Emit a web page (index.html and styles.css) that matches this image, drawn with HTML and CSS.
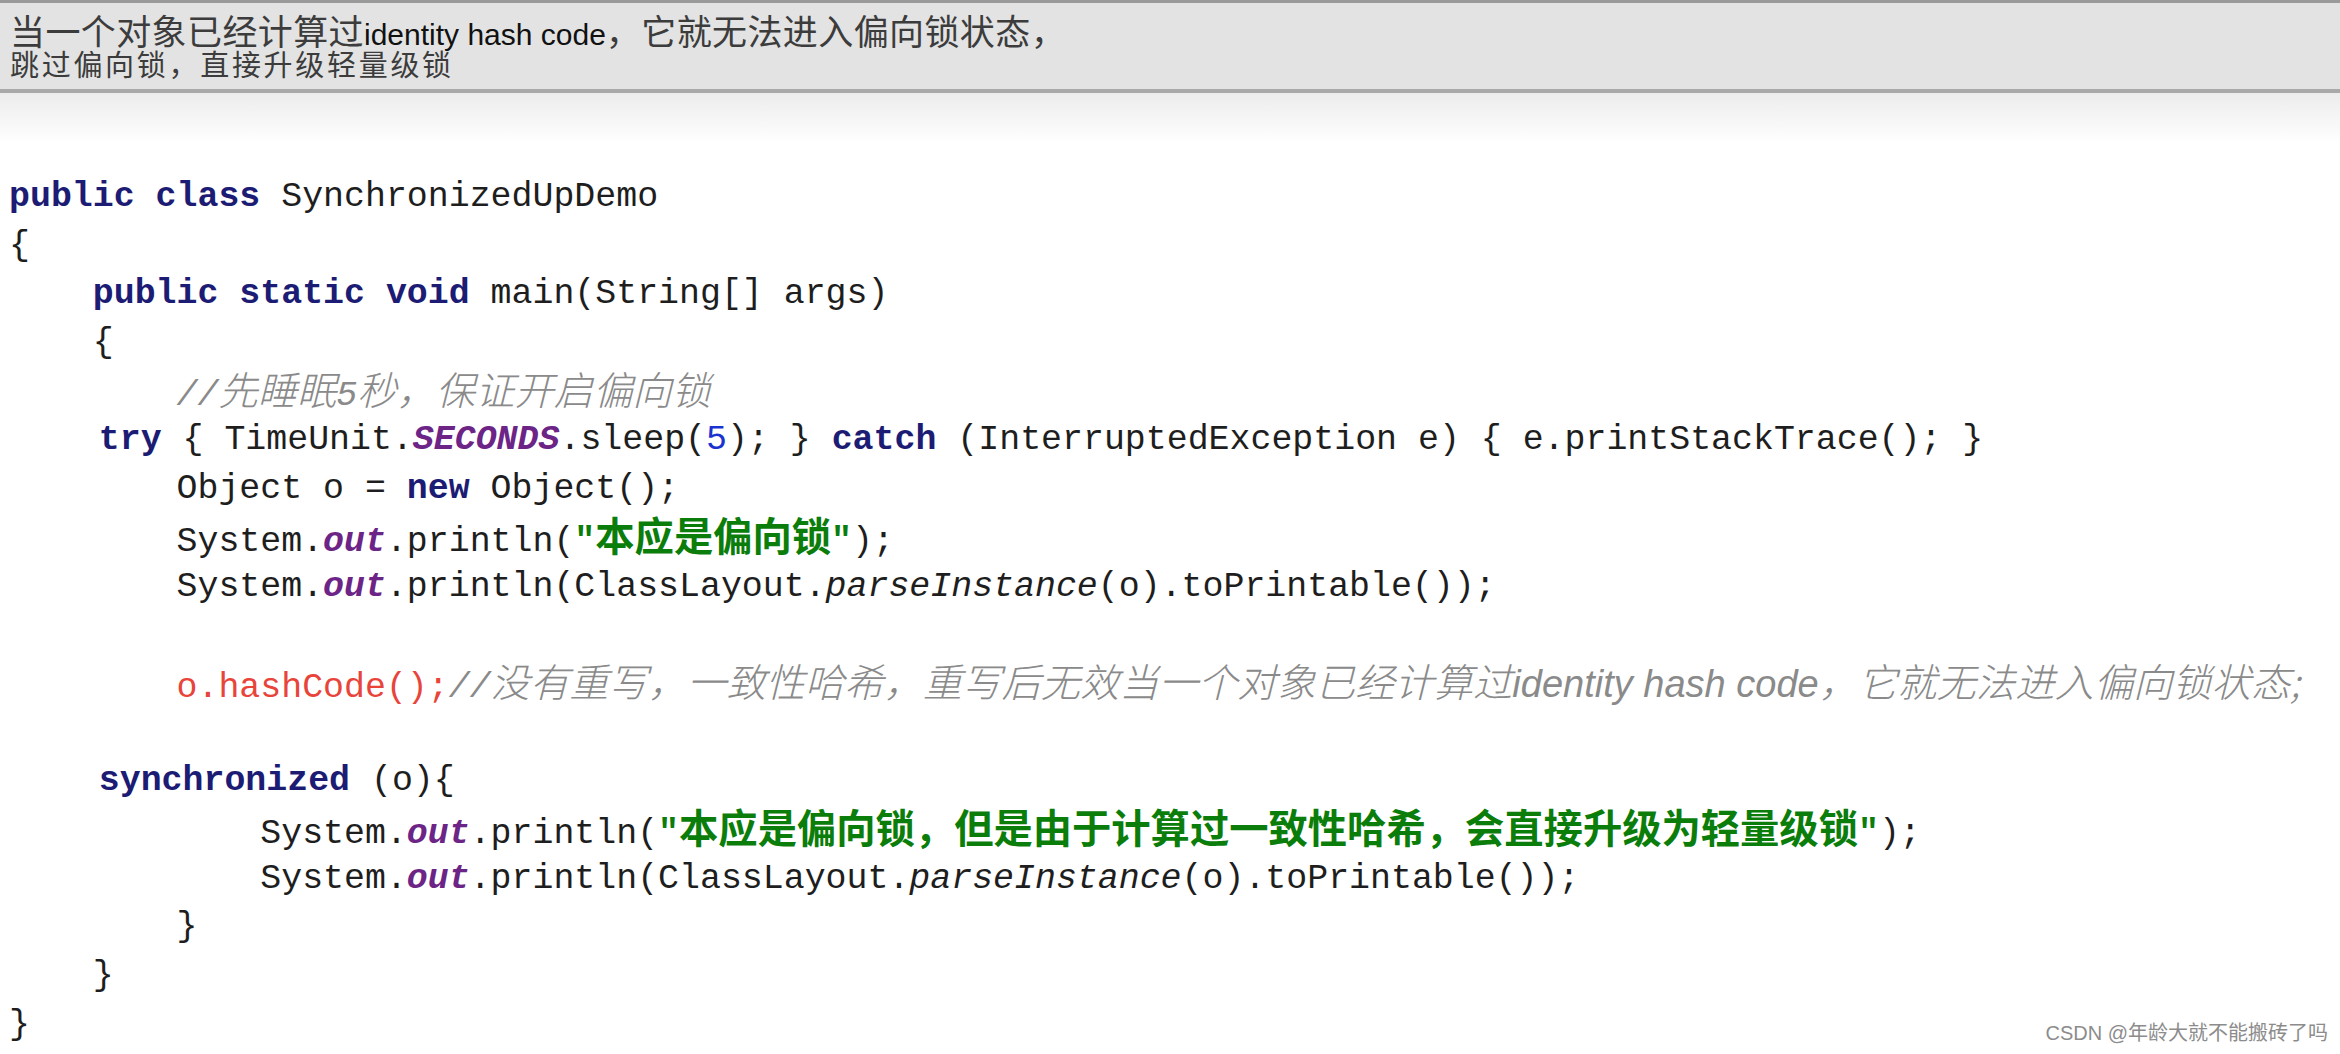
FILE: index.html
```html
<!DOCTYPE html>
<html lang="zh-CN">
<head>
    <meta charset="UTF-8">
    <meta name="viewport" content="width=device-width, initial-scale=1.0">
    <title>SynchronizedUpDemo</title>
    <link rel="stylesheet" href="styles.css">
</head>
<body>
    <div class="banner">
        <p class="note-main">当一个对象已经计算过<span class="lat">identity hash code</span>，它就无法进入偏向锁状态，</p>
        <p class="note-sub">跳过偏向锁，直接升级轻量级锁</p>
    </div>
    <div class="fade"></div>

    <div class="code">
        <div class="ln"><b class="kw">public class</b> SynchronizedUpDemo</div>
        <div class="ln">{</div>
        <div class="ln">    <b class="kw">public static void</b> main(String[] args)</div>
        <div class="ln">    {</div>
        <div class="ln">        <i class="cm">//<span class="zh">先睡眠</span>5<span class="zh">秒，保证开启偏向锁</span></i></div>
        <div class="ln nudge">    <b class="kw">try</b> { TimeUnit.<b class="st">SECONDS</b>.sleep(<span class="num">5</span>); } <b class="kw">catch</b> (InterruptedException e) { e.printStackTrace(); }</div>
        <div class="ln">        Object o = <b class="kw">new</b> Object();</div>
        <div class="ln">        System.<b class="st">out</b>.println(<b class="str">"<span class="zh">本应是偏向锁</span>"</b>);</div>
        <div class="ln">        System.<b class="st">out</b>.println(ClassLayout.<i>parseInstance</i>(o).toPrintable());</div>
        <div class="ln"> </div>
        <div class="ln">        <span class="hl">o.hashCode();</span><i class="cm">//<span class="zh">没有重写，一致性哈希，重写后无效当一个对象已经计算过</span><span class="en">identity hash code</span><span class="zh">，它就无法进入偏向锁状态;</span></i></div>
        <div class="ln"> </div>
        <div class="ln nudge">    <b class="kw">synchronized</b> (o){</div>
        <div class="ln">            System.<b class="st">out</b>.println(<b class="str">"<span class="zh">本应是偏向锁，但是由于计算过一致性哈希，会直接升级为轻量级锁</span>"</b>);</div>
        <div class="ln">            System.<b class="st">out</b>.println(ClassLayout.<i>parseInstance</i>(o).toPrintable());</div>
        <div class="ln">        }</div>
        <div class="ln">    }</div>
        <div class="ln">}</div>
    </div>

    <div class="mark">CSDN @年龄大就不能搬砖了吗</div>
</body>
</html>
```

FILE: styles.css
```css
body {
    margin: 0;
    width: 2340px;
    height: 1054px;
    overflow: hidden;
    position: relative;
    background: #fff;
    font-family: "Liberation Sans", "Noto Sans CJK SC", sans-serif;
}
.banner {
    height: 86px;
    padding: 0 10px;
    background: #e3e3e3;
    border-top: 3px solid #9a9a9a;
    border-bottom: 4px solid #a9a9a9;
}
.note-main {
    margin: 0;
    padding-top: 16px;
    font-size: 35px;
    letter-spacing: 0.4px;
    line-height: 27px;
    color: #3c3c3c;
    white-space: nowrap;
}
.note-main .lat {
    font-size: 30px;
    letter-spacing: 0;
    color: #111;
}
.note-sub {
    margin: 0;
    font-size: 29px;
    letter-spacing: 2.7px;
    line-height: 36px;
    color: #3c3c3c;
}
.fade {
    height: 50px;
    background: linear-gradient(#ececec, #fff);
}
.code {
    padding: 30px 0 0 9px;
    font-family: "Liberation Mono", "Noto Sans CJK SC", monospace;
    font-size: 34.9px;
    color: #1e1e1e;
}
.ln {
    height: 48.7px;
    line-height: 48.7px;
    white-space: pre;
}
.nudge {
    padding-left: 6px;
}
.kw {
    color: #1c1c74;
    font-weight: bold;
}
.st {
    color: #6c2486;
    font-weight: bold;
    font-style: italic;
}
.num {
    color: #1a33d0;
}
.str {
    color: #0b7d0b;
    font-weight: bold;
}
.hl {
    color: #e8443a;
}
.cm {
    color: #8a8a8a;
}
.zh {
    font-family: "Noto Sans CJK SC", sans-serif;
    font-size: 39.3px;
    line-height: 1;
}
.cm .zh {
    font-weight: 300;
}
.cm .en {
    font-family: "Liberation Sans", sans-serif;
    font-size: 38px;
    line-height: 1;
}
.mark {
    position: absolute;
    right: 12px;
    bottom: 8px;
    font-size: 20px;
    color: #8c8c8c;
    text-shadow: 0 0 2px #fff;
}
```
